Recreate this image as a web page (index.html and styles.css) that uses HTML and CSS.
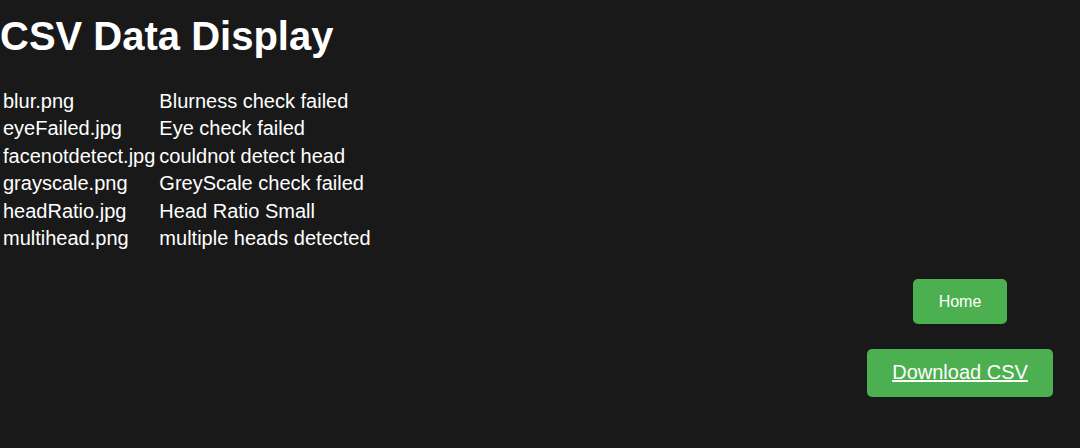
FILE: index.html
```html
<!DOCTYPE html>
<html lang="en">
<head>
<meta charset="utf-8">
<title>CSV Data Display</title>
<link rel="stylesheet" href="styles.css">
</head>
<body>
<h1 class="title">CSV Data Display</h1>
<table class="data">
  <tr><td>blur.png</td><td>Blurness check failed</td></tr>
  <tr><td>eyeFailed.jpg</td><td>Eye check failed</td></tr>
  <tr><td>facenotdetect.jpg</td><td>couldnot detect head</td></tr>
  <tr><td>grayscale.png</td><td>GreyScale check failed</td></tr>
  <tr><td>headRatio.jpg</td><td>Head Ratio Small</td></tr>
  <tr><td>multihead.png</td><td>multiple heads detected</td></tr>
</table>
<div class="actions">
  <div class="action-col">
    <button class="btn btn-home" type="button">Home</button>
    <a class="btn btn-download" href="#">Download CSV</a>
  </div>
</div>
</body>
</html>
```
FILE: styles.css
```css
html, body {
  background: #191919;
}
body {
  margin: 0;
  color: #ffffff;
  font-family: "Liberation Sans", Arial, sans-serif;
}
.title {
  font-size: 40px;
  font-weight: bold;
  margin: 13px 0 28px;
  line-height: 46px;
}
.data {
  border-spacing: 2px;
  font-size: 20px;
}
.data td {
  padding: 1px;
  line-height: 23.4px;
  white-space: nowrap;
}
.actions {
  display: flex;
  justify-content: flex-end;
  margin-top: 26px;
}
.action-col {
  width: 240px;
  display: flex;
  flex-direction: column;
  align-items: center;
  gap: 25px;
}
.btn {
  background: #4caf50;
  color: #ffffff;
  border: none;
  border-radius: 5px;
  font-family: "Liberation Sans", Arial, sans-serif;
  display: block;
}
.btn-home {
  font-size: 16px;
  padding: 13px 26px;
  line-height: 19px;
}
.btn-download {
  font-size: 20px;
  padding: 11px 25px 13px;
  line-height: 24px;
  text-decoration: underline;
}
```
